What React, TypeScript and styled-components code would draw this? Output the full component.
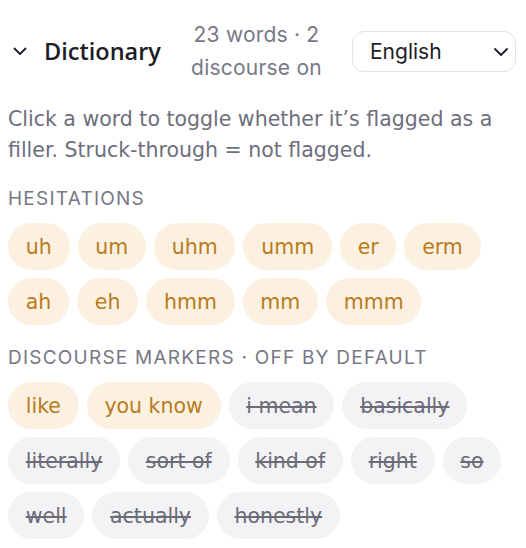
import React from "react";
import styled, { createGlobalStyle } from "styled-components";

const Global = createGlobalStyle`
  html, body { margin: 0; padding: 0; background: #ffffff; }
  body { font-family: "DejaVu Sans", "Open Sans", sans-serif; }
`;

const Panel = styled.div`
  padding: 18px 10px 8px 8px;
  width: 526px;
  box-sizing: border-box;
`;

const Header = styled.div`
  display: flex;
  align-items: center;
`;

const TitleButton = styled.button`
  display: flex;
  align-items: center;
  gap: 17px;
  border: 0;
  background: none;
  padding: 0 0 0 5px;
  cursor: pointer;
  color: #1d1d27;
  font-family: "Open Sans", sans-serif;
  font-size: 23.5px;
  font-weight: 600;
`;

const Meta = styled.div`
  flex: 1;
  text-align: center;
  font-family: Inter, sans-serif;
  font-size: 21px;
  letter-spacing: 0.01em;
  line-height: 33px;
  color: #787888;
  padding: 0 16px;
`;

const SelectWrap = styled.div`
  position: relative;
  width: 164px;
  height: 41px;
  flex-shrink: 0;
`;

const Select = styled.select`
  appearance: none;
  width: 100%;
  height: 100%;
  border: 1.5px solid #e2e2e8;
  border-radius: 12px;
  background: #fff;
  padding: 0 0 0 17px;
  font-family: Inter, sans-serif;
  font-size: 21px;
  color: #1d1d27;
`;

const SelectIcon = styled.svg`
  position: absolute;
  right: 7px;
  top: 13px;
  pointer-events: none;
`;

const Description = styled.p`
  margin: 20px 0 0;
  font-size: 20.5px;
  line-height: 31px;
  color: #6e6e7c;
`;

const SectionLabel = styled.div`
  margin-top: 21px;
  font-family: Inter, sans-serif;
  font-size: 19px;
  letter-spacing: 0.065em;
  color: #777786;
  text-transform: uppercase;
  line-height: 24px;
`;

const ChipRow = styled.div`
  display: flex;
  flex-wrap: wrap;
  gap: 8px;
  margin-top: 12px;
`;

const Chip = styled.button<{ $on: boolean }>`
  height: 47px;
  padding: 0 17.75px;
  border: 0;
  border-radius: 24px;
  font-family: "DejaVu Sans", sans-serif;
  font-size: 20.5px;
  cursor: pointer;
  background: ${(p) => (p.$on ? "#fcf1e0" : "#f3f3f5")};
  color: ${(p) => (p.$on ? "#b97b20" : "#6c6c78")};
  text-decoration: ${(p) => (p.$on ? "none" : "line-through")};
`;

const hesitations = ["uh", "um", "uhm", "umm", "er", "erm", "ah", "eh", "hmm", "mm", "mmm"];
const discourse: [string, boolean][] = [
  ["like", true],
  ["you know", true],
  ["i mean", false],
  ["basically", false],
  ["literally", false],
  ["sort of", false],
  ["kind of", false],
  ["right", false],
  ["so", false],
  ["well", false],
  ["actually", false],
  ["honestly", false],
];

export default function App() {
  return (
    <Panel>
      <Global />
      <Header>
        <TitleButton>
          <svg width="14" height="9" viewBox="0 0 14 9" fill="none">
            <path d="M1.5 1.5 L7 7 L12.5 1.5" stroke="#1d1d27" strokeWidth="1.8" strokeLinecap="round" strokeLinejoin="round" />
          </svg>
          Dictionary
        </TitleButton>
        <Meta>23 words · 2 discourse on</Meta>
        <SelectWrap>
          <Select defaultValue="en">
            <option value="en">English</option>
          </Select>
          <SelectIcon width="16" height="16" viewBox="0 0 16 16" fill="none">
            <path d="M2 5 L8 11 L14 5" stroke="#1d1d27" strokeWidth="1.8" strokeLinecap="round" strokeLinejoin="round" />
          </SelectIcon>
        </SelectWrap>
      </Header>
      <Description>
        Click a word to toggle whether it’s flagged as a filler. Struck-through = not flagged.
      </Description>
      <SectionLabel>Hesitations</SectionLabel>
      <ChipRow>
        {hesitations.map((w) => (
          <Chip key={w} $on>
            {w}
          </Chip>
        ))}
      </ChipRow>
      <SectionLabel>Discourse markers · off by default</SectionLabel>
      <ChipRow>
        {discourse.map(([w, on]) => (
          <Chip key={w} $on={on}>
            {w}
          </Chip>
        ))}
      </ChipRow>
    </Panel>
  );
}
